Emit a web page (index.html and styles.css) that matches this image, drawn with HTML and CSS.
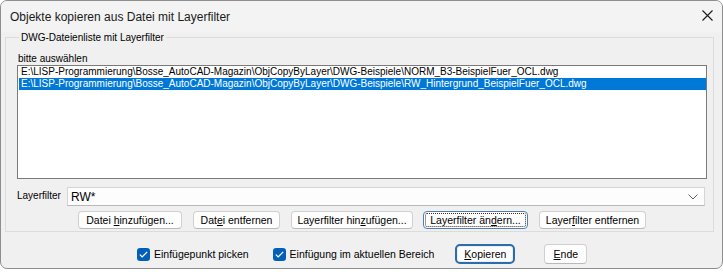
FILE: index.html
```html
<!DOCTYPE html>
<html lang="de">
<head>
  <meta charset="UTF-8" />
  <title>Objekte kopieren aus Datei mit Layerfilter</title>
  <link rel="stylesheet" href="styles.css">
</head>
<body>
  <div class="window">
    <div class="titlebar">
      <span class="title">Objekte kopieren aus Datei mit Layerfilter</span>
      <span class="close">
        <svg width="11" height="11" viewBox="0 0 11 11"><path d="M0.5 0.5 L10.5 10.5 M10.5 0.5 L0.5 10.5" stroke="#1a1a1a" stroke-width="1.1" fill="none"/></svg>
      </span>
    </div>

    <fieldset class="group">
      <legend>DWG-Dateienliste mit Layerfilter</legend>
      <div class="hint">bitte auswählen</div>
      <div class="listbox">
        <div class="item">E:\LISP-Programmierung\Bosse_AutoCAD-Magazin\ObjCopyByLayer\DWG-Beispiele\NORM_B3-BeispielFuer_OCL.dwg</div>
        <div class="item selected">E:\LISP-Programmierung\Bosse_AutoCAD-Magazin\ObjCopyByLayer\DWG-Beispiele\RW_Hintergrund_BeispielFuer_OCL.dwg</div>
      </div>

      <div class="filter-row">
        <span class="filter-label">Layerfilter</span>
        <div class="combo">
          <span>RW*</span>
          <svg width="10" height="6" viewBox="0 0 10 6"><path d="M0.5 0.5 L5 5 L9.5 0.5" stroke="#606060" stroke-width="1" fill="none"/></svg>
        </div>
      </div>

      <div class="button-row">
        <button class="btn b1"><span>Datei <u>h</u>inzufügen...</span></button>
        <button class="btn b2"><span>Dat<u>e</u>i entfernen</span></button>
        <button class="btn b3"><span>Layerfilter hin<u>z</u>ufügen...</span></button>
        <button class="btn b4 focused"><span class="focus-ring"><span>Layerfilter än<u>d</u>ern...</span></span></button>
        <button class="btn b5"><span>Layer<u>f</u>ilter entfernen</span></button>
      </div>
    </fieldset>

    <div class="footer">
      <label class="check"><span class="box"><svg width="9" height="7" viewBox="0 0 9 7"><path d="M0.8 3.6 L3.2 5.9 L8.2 0.9" stroke="#fff" stroke-width="1.3" fill="none"/></svg></span>Einfügepunkt picken</label>
      <label class="check c2"><span class="box"><svg width="9" height="7" viewBox="0 0 9 7"><path d="M0.8 3.6 L3.2 5.9 L8.2 0.9" stroke="#fff" stroke-width="1.3" fill="none"/></svg></span>Einfügung im aktuellen Bereich</label>
      <button class="btn default"><span><u>K</u>opieren</span></button>
      <button class="btn end"><span><u>E</u>nde</span></button>
    </div>
  </div>
</body>
</html>
```

FILE: styles.css
```css
body {
  margin: 0;
  background: #ffffff;
  font-family: "Liberation Sans", Arial, sans-serif;
  font-size: 10px;
  color: #000;
}
.window {
  width: 721px;
  height: 267px;
  border: 1px solid #8e8e8e;
  border-radius: 7px;
  background: #f0f0f0;
  overflow: hidden;
}
.titlebar {
  height: 31px;
  display: flex;
  align-items: center;
  justify-content: space-between;
  padding: 0 9px 0 9px;
  background: #f3f3f3;
}
.title {
  font-size: 12px;
  color: #1a1a1a;
}
.close {
  display: flex;
  margin-top: -2px;
}
.group {
  margin: 0 8px 0 4px;
  padding: 0 6px 5px 11px;
  border: 1px solid #dcdcdc;
  border-radius: 0;
  height: 200px;
  box-sizing: border-box;
}
.group legend {
  padding: 0 2px;
  margin-left: 2px;
  font-size: 10px;
  color: #000;
}
.hint {
  margin-top: 10px;
  margin-left: 1px;
  line-height: 12px;
}
.listbox {
  height: 114px;
  border: 1px solid #7a7a7a;
  background: #fff;
  padding: 0 0 0 1px;
  box-sizing: border-box;
  width: 690px;
}
.item {
  height: 12px;
  line-height: 12px;
  padding-left: 2px;
  white-space: nowrap;
}
.selected {
  background: #0078d7;
  color: #fff;
}
.filter-row {
  display: flex;
  align-items: center;
  margin-top: 8px;
}
.filter-label {
  width: 50px;
  margin-top: -3px;
}
.combo {
  width: 638px;
  height: 19px;
  box-sizing: border-box;
  border: 1px solid #d5d5d5;
  border-bottom-color: #b8b8b8;
  background: #fdfdfd;
  display: flex;
  align-items: center;
  justify-content: space-between;
  padding: 0 6px 0 3px;
  font-size: 12px;
}
.combo svg {
  margin-top: 1px;
}
.button-row {
  display: flex;
  margin-top: 5px;
  margin-left: 61px;
}
.btn {
  font-family: "Liberation Sans", Arial, sans-serif;
  font-size: 10.5px;
  color: #000;
  background: #fdfdfd;
  border: 1px solid #d0d0d0;
  border-bottom-color: #b9b9b9;
  border-radius: 4px;
  height: 18px;
  padding: 0;
  box-sizing: border-box;
  display: flex;
  align-items: center;
  justify-content: center;
  white-space: nowrap;
}
.b1 { width: 104px; }
.b2 { width: 87px; margin-left: 11px; }
.b3 { width: 122px; margin-left: 11px; }
.b4 { width: 105px; margin-left: 10px; }
.b5 { width: 107px; margin-left: 11px; }
.focused {
  border: 1px solid #4f7fb0;
  padding: 1px;
}
.focus-ring {
  display: flex;
  align-items: center;
  justify-content: center;
  width: 100%;
  height: 100%;
  box-sizing: border-box;
  border: 1px dotted #333;
  border-radius: 2px;
}
.footer {
  display: flex;
  align-items: center;
  margin-top: 12px;
  padding-left: 136px;
}
.check {
  display: flex;
  align-items: center;
  font-size: 10.5px;
}
.c2 { margin-left: 24px; }
.box {
  width: 13px;
  height: 13px;
  border-radius: 3px;
  background: #005fb8;
  margin-right: 4px;
  display: flex;
  align-items: center;
  justify-content: center;
}
.default {
  width: 60px;
  height: 20px;
  margin-left: 21px;
  border: 2px solid #2b6ca9;
  border-radius: 5px;
  box-shadow: inset 0 0 0 1px #e8eef5;
}
.end {
  width: 43px;
  height: 20px;
  margin-left: 29px;
}
```
